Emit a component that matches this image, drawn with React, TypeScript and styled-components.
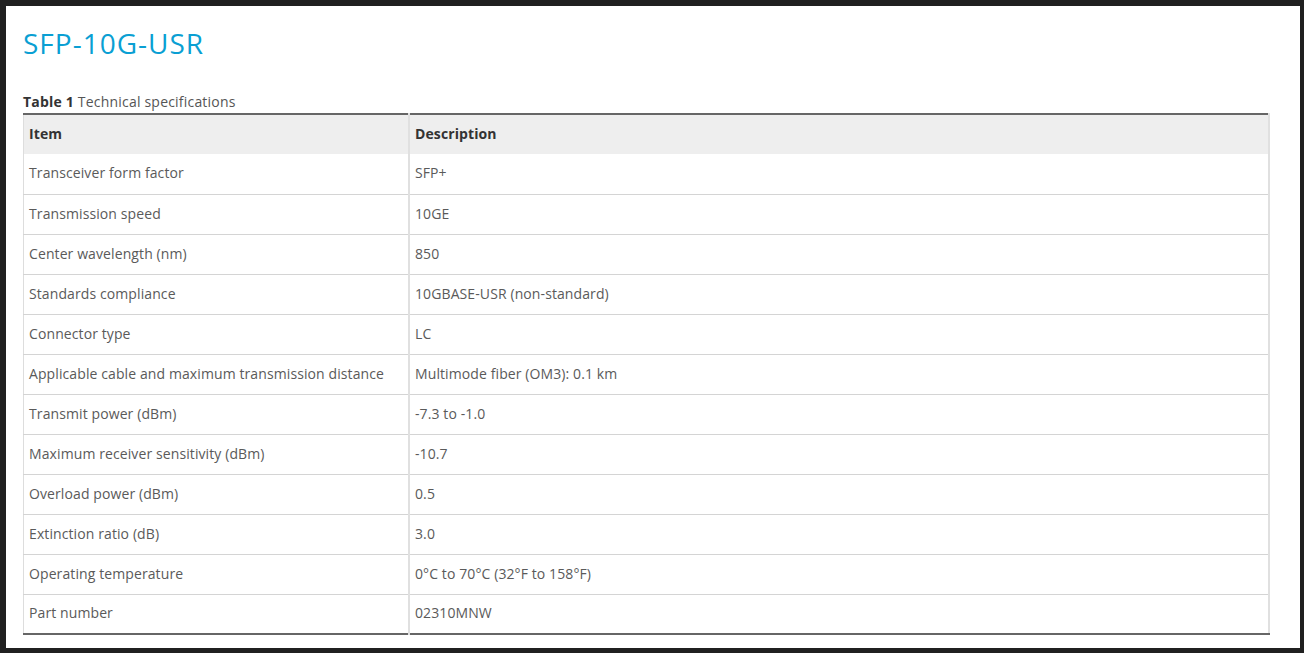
import React from "react";
import styled, {createGlobalStyle} from "styled-components";

const GlobalStyle = createGlobalStyle`
  html, body {
    margin: 0;
    padding: 0;
    background: #202020;
  }
`;

const Frame = styled.div`
  width: 1304px;
  height: 653px;
  box-sizing: border-box;
  padding: 6px 4px 5px 6px;
  display: flex;
`;

const Page = styled.main`
  flex: 1;
  background: #ffffff;
  padding: 19px 24px 0 17px;
  font-family: "Open Sans", "Noto Sans", sans-serif;
  color: #555555;
`;

const Title = styled.h1`
  margin: 0;
  font-size: 28px;
  line-height: 36px;
  font-weight: normal;
  color: #0a9fd3;
  letter-spacing: 1px;
`;

const Caption = styled.div`
  margin-top: 32px;
  font-size: 14px;
  line-height: 18px;
  color: #555;
  letter-spacing: 0.2px;

  b {
    font-weight: 700;
    color: #333;
  }
`;

const Table = styled.table`
  width: 1247px;
  margin-top: 2px;
  border-collapse: collapse;
  border-top: 2px solid #666666;
  border-bottom: 2px solid #666666;
  border-left: 1px solid #dddddd;
  border-right: 2px solid #e0e0e0;
  font-size: 14px;
`;

const Row = styled.tr<{$head?: boolean}>`
  height: 40px;
  background: ${(p) => (p.$head ? "#eeeeee" : "#ffffff")};
  border-bottom: 1px solid #d4d4d4;

  &:last-child {
    border-bottom: none;
  }
`;

const Cell = styled.td<{$head?: boolean}>`
  padding: 0 5px 2px;
  vertical-align: middle;
  text-align: left;
  font-weight: ${(p) => (p.$head ? 700 : 400)};
  color: ${(p) => (p.$head ? "#333" : "#5a5a5a")};
  letter-spacing: 0.1px;

  &:first-child {
    width: 374px;
    border-right: 2px solid #e0e0e0;
  }
`;

const specs: [string, string][] = [
  ["Transceiver form factor", "SFP+"],
  ["Transmission speed", "10GE"],
  ["Center wavelength (nm)", "850"],
  ["Standards compliance", "10GBASE-USR (non-standard)"],
  ["Connector type", "LC"],
  ["Applicable cable and maximum transmission distance", "Multimode fiber (OM3): 0.1 km"],
  ["Transmit power (dBm)", "-7.3 to -1.0"],
  ["Maximum receiver sensitivity (dBm)", "-10.7"],
  ["Overload power (dBm)", "0.5"],
  ["Extinction ratio (dB)", "3.0"],
  ["Operating temperature", "0°C to 70°C (32°F to 158°F)"],
  ["Part number", "02310MNW"],
];

const App: React.FC = () => {
  return (
    <>
      <GlobalStyle />
      <Frame>
        <Page>
          <Title>SFP-10G-USR</Title>
          <Caption>
            <b>Table 1</b> Technical specifications
          </Caption>
          <Table>
            <thead>
              <Row $head>
                <Cell as="th" $head>
                  Item
                </Cell>
                <Cell as="th" $head>
                  Description
                </Cell>
              </Row>
            </thead>
            <tbody>
              {specs.map(([item, desc]) => (
                <Row key={item}>
                  <Cell>{item}</Cell>
                  <Cell>{desc}</Cell>
                </Row>
              ))}
            </tbody>
          </Table>
        </Page>
      </Frame>
    </>
  );
};

export default App;
